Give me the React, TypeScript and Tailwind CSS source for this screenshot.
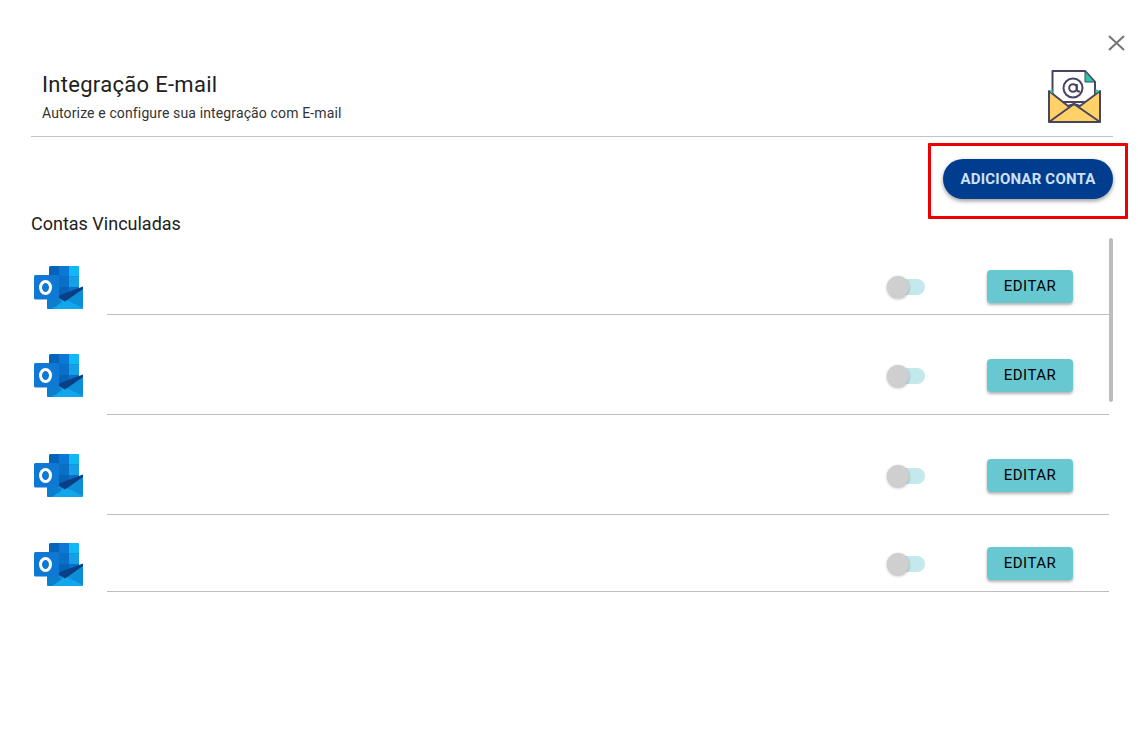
const OutlookIcon = () => (
  <svg width="50" height="44" viewBox="0 0 50 44" className="shrink-0">
    <rect x="15" y="0" width="30" height="33" rx="1.5" fill="#0364B8" />
    <rect x="25" y="0" width="10" height="10.500" fill="#0A78D4" />
    <path d="M35 0h8.500A1.500 1.500 0 0 1 45 1.500V10.500H35z" fill="#10B8F5" />
    <rect x="25" y="10.500" width="10" height="10.500" fill="#0A6FC6" />
    <rect x="35" y="10.500" width="10" height="10.500" fill="#149FE6" />
    <rect x="35" y="21" width="10" height="10" fill="#0A6FC6" />
    <path d="M49 21v20.500a1.500 1.500 0 0 1-1.500 1.500h-33a1.500 1.500 0 0 1-1.500-1.500V30h16z" fill="#0C8FD8" />
    <path d="M14 43h33.500q1 0 1.500-.8L31 33z" fill="#12A6EA" />
    <path d="M13 33v8.500a1.500 1.500 0 0 0 1.500 1.500H18L28 36l-5-3z" fill="#0C7FCC" />
    <path d="M49 20.500 25 29.500v2.500l6 3.500L49 23z" fill="#0A3F85" />
    <rect x="0" y="9" width="25" height="24.500" rx="1.500" fill="#0F78D4" />
    <ellipse cx="11.500" cy="21.500" rx="5" ry="6" fill="none" stroke="#FFFFFF" strokeWidth="3" />
  </svg>
);

const MailIcon = () => (
  <svg width="53" height="54" viewBox="1 0 53 54" className="shrink-0">
    <path d="M5.500 1h32.500l10 11V32H5.500z" fill="#FFFFFF" stroke="#47455F" strokeWidth="2" strokeLinejoin="round" />
    <path d="M38 1v11h10z" fill="#2EC4A6" stroke="#47455F" strokeWidth="1" strokeLinejoin="round" />
    <circle cx="26" cy="18" r="9.500" fill="none" stroke="#47455F" strokeWidth="2" />
    <circle cx="26" cy="18" r="3.800" fill="none" stroke="#47455F" strokeWidth="2" />
    <path d="M29.800 14v5q0 3 3.500 2.500" fill="none" stroke="#47455F" strokeWidth="2" />
    <path d="M2 21v31h51V21L33 36l-6-2-6 2z" fill="#FFD166" stroke="#47455F" strokeWidth="2" strokeLinejoin="round" />
    <path d="M2 52l25-18 26 18" fill="none" stroke="#47455F" strokeWidth="2" strokeLinejoin="round" />
    <path d="M2.500 21l3 3v-5zM52.500 21l-4 3v-5z" fill="#2EC4A6" />
  </svg>
);

const rows = [
  { key: 1, rowClass: "pt-[32px]", iconClass: "-mt-[4px]", rightClass: "pb-[11px]" },
  { key: 2, rowClass: "pt-[44px]", iconClass: "-mt-[5px]", rightClass: "pb-[22px]" },
  { key: 3, rowClass: "pt-[44px]", iconClass: "-mt-[5px]", rightClass: "pb-[22px]" },
  { key: 4, rowClass: "pt-[32px]", iconClass: "-mt-[4px]", rightClass: "pb-[11px]" },
];

const AccountRow = ({ rowClass, iconClass, rightClass }: { rowClass: string; iconClass: string; rightClass: string }) => (
  <div className={`flex ${rowClass}`}>
    <div className={`w-[76px] shrink-0 pl-[3px] ${iconClass}`}>
      <OutlookIcon />
    </div>
    <div className={`flex flex-1 items-center justify-end border-b border-[#bdbdbd] pr-[36px] ${rightClass}`}>
      <div className="relative mr-[62px] h-[16px] w-[38px] rounded-full bg-[#c3e9ed]">
        <div className="absolute left-0 -top-[3px] h-[22px] w-[22px] rounded-full bg-[#cfcfcf] shadow-[0_1px_3px_rgba(0,0,0,0.3)]" />
      </div>
      <button className="h-[33px] w-[86px] rounded-[4px] bg-[#67c8d2] text-[15px] font-normal tracking-[0.5px] text-[#000000] shadow-[0_2px_3px_rgba(0,0,0,0.3)]">
        EDITAR
      </button>
    </div>
  </div>
);

export default function App() {
  return (
    <div className="h-[741px] w-full overflow-hidden bg-white pl-[31px] pr-[25px] pt-[35px] font-['Roboto',sans-serif] text-[#212121]">
      <div className="-mr-[12px] flex justify-end">
        <svg width="17" height="16" viewBox="0 0 17 16">
          <path d="M1 1l15 14M16 1L1 15" stroke="#757575" strokeWidth="2" fill="none" />
        </svg>
      </div>
      <div className="-mt-[16px] flex items-end justify-between border-b border-[#c4c4c4] pb-[11px] pl-[11px] pr-[12px] pt-[35px]">
        <div className="mb-[2px]">
          <h1 className="text-[22px] font-normal leading-[28px] tracking-[0.3px]">Integração E-mail</h1>
          <p className="mt-[4px] text-[14px] leading-[20px] tracking-[0.13px] text-[#333333]">Autorize e configure sua integração com E-mail</p>
        </div>
        <div className="mb-[1px]">
          <MailIcon />
        </div>
      </div>
      <div className="mt-[22px] flex justify-end">
        <div className="relative">
          <button className="h-[40px] w-[170px] rounded-full bg-[#013d8f] text-[15px] font-bold tracking-[0.2px] text-[#cfe0f5] shadow-[0_2px_4px_rgba(0,0,0,0.4)]">
            ADICIONAR CONTA
          </button>
          <div className="absolute -bottom-[20px] -left-[15px] -right-[15px] -top-[16px] rounded-[1px] border-[3px] border-[#ee0000]" />
        </div>
      </div>
      <h2 className="mt-[13px] text-[18px] font-normal leading-[24px]">Contas Vinculadas</h2>
      <div className="mt-[2px] flex">
        <div className="flex-1">
          {rows.map((row) => (
            <AccountRow key={row.key} rowClass={row.rowClass} iconClass={row.iconClass} rightClass={row.rightClass} />
          ))}
        </div>
        <div className="w-[4px] shrink-0">
          <div className="h-[164px] rounded-full bg-[#bdbdbd]" />
        </div>
      </div>
    </div>
  );
}
